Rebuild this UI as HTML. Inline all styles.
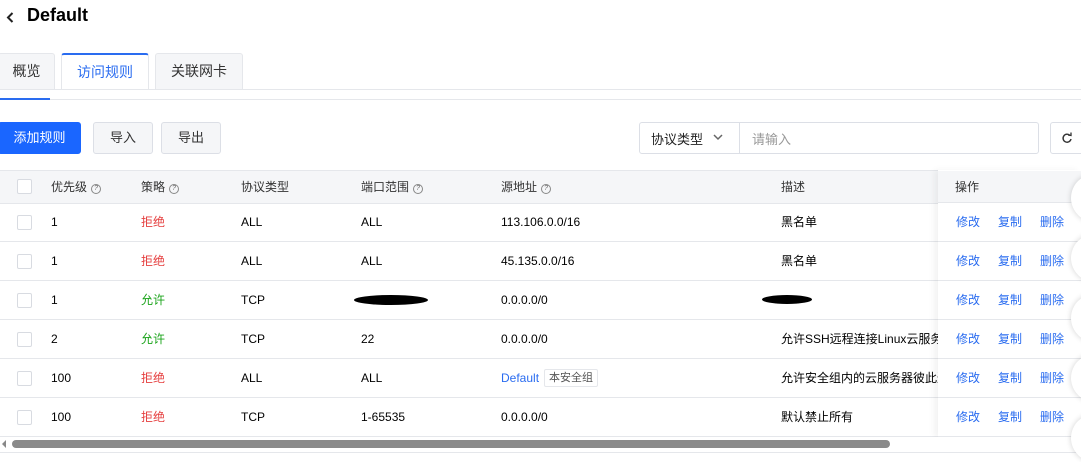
<!DOCTYPE html>
<html><head><meta charset="utf-8"><style>
*{box-sizing:border-box;margin:0;padding:0}
body{width:1081px;height:454px;overflow:hidden;background:#fff;font-family:"Liberation Sans","Noto Sans CJK SC",sans-serif;font-size:12px;color:#000;position:relative}
.abs{position:absolute}
.title{left:27px;top:5px;font-size:18px;font-weight:bold;color:#000}
.tab{position:absolute;top:53px;height:36px;border:1px solid #e5e7eb;border-bottom:none;background:#f5f6f8;font-size:14px;color:#333;line-height:34px;text-align:center;border-radius:3px 3px 0 0}
.btn{position:absolute;top:122px;height:32px;border:1px solid #dcdfe6;border-radius:3px;background:#f5f6f8;font-size:13px;color:#333;text-align:center;line-height:30px}
.row{position:absolute;left:0;width:1081px;height:39px;border-bottom:1px solid #e5e7eb;font-size:12px;line-height:38px}
.row span{position:absolute;top:0;white-space:nowrap}
.cb{position:absolute;left:17px;top:12px;width:15px;height:15px;border:1px solid #d8dbe1;border-radius:2px;background:#fff}
.red{color:#e53e3e}.green{color:#1aa31a}.blue{color:#2a6cf0}
.q{display:inline-block;width:10px;height:10px;border:1px solid #888;border-radius:50%;font-size:7px;line-height:8px;text-align:center;color:#666;margin-left:4px;vertical-align:1px}
.circ{position:absolute;left:1071px;width:48px;height:48px;border-radius:50%;background:#fff;box-shadow:0 0 6px rgba(0,0,0,.18)}
.op{position:absolute;left:938px;width:143px;height:39px;border-bottom:1px solid #e5e7eb;line-height:38px;color:#2a6cf0}
.op b{position:absolute;font-weight:normal}
</style></head><body>
<svg class="abs" style="left:5px;top:11px" width="10" height="14"><path d="M7.5 2L3 6.5L7.5 11" stroke="#222" stroke-width="2" fill="none"/></svg>
<div class="abs title">Default</div>
<div class="tab" style="left:-2px;width:57px">概览</div>
<div class="tab" style="left:61px;width:88px;background:#fff;color:#2a6cf0;border-top:2px solid #2a6cf0;height:37px">访问规则</div>
<div class="tab" style="left:155px;width:88px">关联网卡</div>
<div class="abs" style="left:0;top:89px;width:1081px;height:1px;background:#e5e7eb"></div>
<div class="abs" style="left:0;top:99px;width:1081px;height:1px;background:#e5e7eb"></div>
<div class="abs" style="left:0;top:98px;width:50px;height:2px;background:#2a6cf0"></div>
<div class="btn" style="left:-2px;width:83px;background:#1a66ff;border-color:#1a66ff;color:#fff">添加规则</div>
<div class="btn" style="left:93px;width:60px">导入</div>
<div class="btn" style="left:161px;width:60px">导出</div>
<div class="abs" style="left:639px;top:122px;width:400px;height:32px;border:1px solid #dcdfe6;border-radius:3px"></div>
<div class="abs" style="left:739px;top:122px;width:1px;height:32px;background:#dcdfe6"></div>
<div class="abs" style="left:651px;top:129px;font-size:13px;color:#222">协议类型</div>
<svg class="abs" style="left:713px;top:133px" width="10" height="8"><path d="M1 2L5 6L9 2" stroke="#666" stroke-width="1.5" fill="none"/></svg>
<div class="abs" style="left:752px;top:129px;font-size:13px;color:#999">请输入</div>
<div class="abs" style="left:1050px;top:122px;width:40px;height:32px;border:1px solid #dcdfe6;border-radius:3px"></div>
<svg class="abs" style="left:1061px;top:132px" width="12" height="12"><path d="M9 3.5A4 4 0 1 0 10 7" stroke="#333" stroke-width="1.4" fill="none"/><path d="M7 3L10 3.5L10 0.5" stroke="#333" stroke-width="1.3" fill="none"/></svg>

<div class="row" style="top:170px;height:34px;background:#f5f6f8;line-height:32px;color:#333;border-top:1px solid #e5e7eb">
<div class="cb" style="top:8px"></div>
<span style="left:51px">优先级<i class="q">?</i></span><span style="left:141px">策略<i class="q">?</i></span><span style="left:241px">协议类型</span><span style="left:361px">端口范围<i class="q">?</i></span><span style="left:501px">源地址<i class="q">?</i></span><span style="left:781px">描述</span></div>

<div class="row" style="top:203px"><div class="cb"></div><span style="left:51px">1</span><span class="red" style="left:141px">拒绝</span><span style="left:241px">ALL</span><span style="left:361px">ALL</span><span style="left:501px">113.106.0.0/16</span><span style="left:781px">黑名单</span></div>
<div class="row" style="top:242px"><div class="cb"></div><span style="left:51px">1</span><span class="red" style="left:141px">拒绝</span><span style="left:241px">ALL</span><span style="left:361px">ALL</span><span style="left:501px">45.135.0.0/16</span><span style="left:781px">黑名单</span></div>
<div class="row" style="top:281px"><div class="cb"></div><span style="left:51px">1</span><span class="green" style="left:141px">允许</span><span style="left:241px">TCP</span><span style="left:354px;top:14px;width:74px;height:10px;background:#000;border-radius:50%"></span><span style="left:501px">0.0.0.0/0</span><span style="left:762px;top:14px;width:50px;height:9px;background:#000;border-radius:50%"></span></div>
<div class="row" style="top:320px"><div class="cb"></div><span style="left:51px">2</span><span class="green" style="left:141px">允许</span><span style="left:241px">TCP</span><span style="left:361px">22</span><span style="left:501px">0.0.0.0/0</span><span style="left:781px">允许SSH远程连接Linux云服务器</span></div>
<div class="row" style="top:359px"><div class="cb"></div><span style="left:51px">100</span><span class="red" style="left:141px">拒绝</span><span style="left:241px">ALL</span><span style="left:361px">ALL</span><span class="blue" style="left:501px">Default</span><span style="left:544px;top:10px;height:18px;line-height:16px;padding:0 4px;border:1px solid #e5e7eb;border-radius:2px;font-size:11px;color:#555">本安全组</span><span style="left:781px">允许安全组内的云服务器彼此通信</span></div>
<div class="row" style="top:398px"><div class="cb"></div><span style="left:51px">100</span><span class="red" style="left:141px">拒绝</span><span style="left:241px">TCP</span><span style="left:361px">1-65535</span><span style="left:501px">0.0.0.0/0</span><span style="left:781px">默认禁止所有</span></div>

<div class="abs" style="left:938px;top:170px;width:143px;height:267px;background:#fff;box-shadow:-4px 0 6px rgba(0,0,0,.05)"></div>
<div class="abs" style="left:938px;top:171px;width:143px;height:32px;background:#f5f6f8;border-bottom:1px solid #e5e7eb;line-height:32px;padding-left:17px;color:#333">操作</div>
<div class="op" style="top:203px"><b style="left:18px">修改</b><b style="left:60px">复制</b><b style="left:102px">删除</b></div>
<div class="op" style="top:242px"><b style="left:18px">修改</b><b style="left:60px">复制</b><b style="left:102px">删除</b></div>
<div class="op" style="top:281px"><b style="left:18px">修改</b><b style="left:60px">复制</b><b style="left:102px">删除</b></div>
<div class="op" style="top:320px"><b style="left:18px">修改</b><b style="left:60px">复制</b><b style="left:102px">删除</b></div>
<div class="op" style="top:359px"><b style="left:18px">修改</b><b style="left:60px">复制</b><b style="left:102px">删除</b></div>
<div class="op" style="top:398px"><b style="left:18px">修改</b><b style="left:60px">复制</b><b style="left:102px">删除</b></div>

<div class="abs" style="left:0;top:437px;width:1081px;height:17px;background:#fff"></div>
<svg class="abs" style="left:1px;top:439px" width="6" height="10"><path d="M5 1L1 5L5 9Z" fill="#888"/></svg>
<div class="abs" style="left:12px;top:440px;width:878px;height:8px;border-radius:4px;background:#8a8a8a"></div>
<div class="abs" style="left:0;top:452px;width:1081px;height:1px;background:#e5e7eb"></div>

<div class="circ" style="top:174px"></div>
<div class="circ" style="top:234px"></div>
<div class="circ" style="top:294px"></div>
<div class="circ" style="top:354px"></div>
<div class="circ" style="top:414px"></div>
</body></html>
